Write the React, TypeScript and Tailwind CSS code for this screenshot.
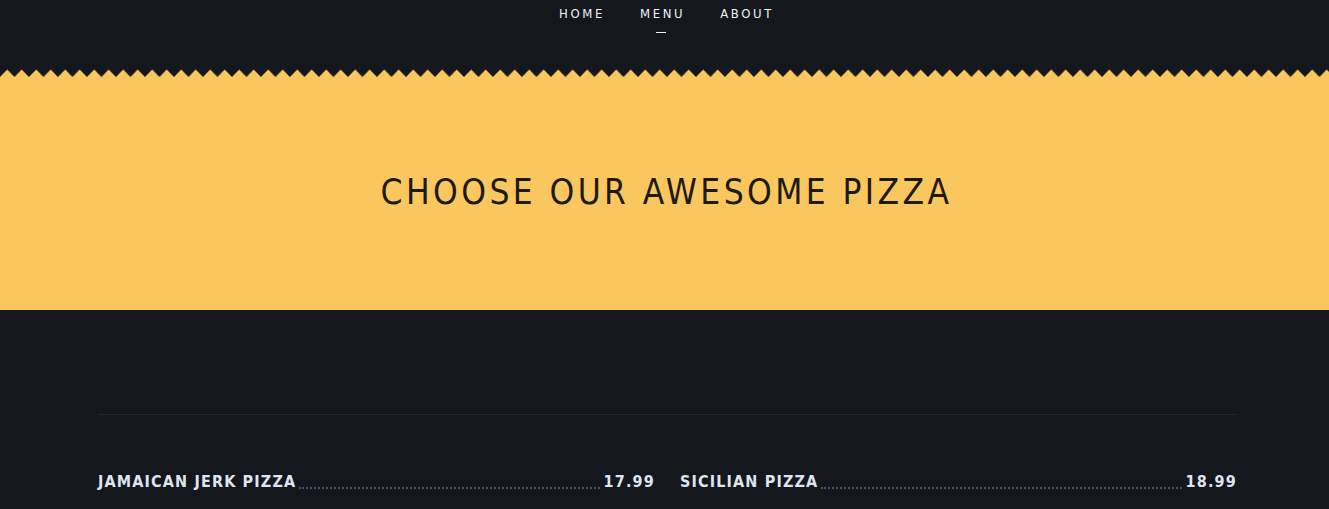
import React from "react";

const font = { fontFamily: '"DejaVu Sans Condensed", "DejaVu Sans", sans-serif' };

function Zigzag() {
  return (
    <svg className="block w-full h-[9px]" preserveAspectRatio="none">
      <defs>
        <pattern id="zz" width="14.5" height="9" patternUnits="userSpaceOnUse">
          <rect width="14.5" height="9" fill="#fac75f" />
          <path d="M0 0 L14.5 0 L14.5 8 L7.25 0.5 L0 8 Z" fill="#14171b" />
        </pattern>
      </defs>
      <rect width="100%" height="9" fill="url(#zz)" />
    </svg>
  );
}

function Item({ name, price }: { name: string; price: string }) {
  return (
    <div className="flex items-end">
      <span className="text-[16px] font-bold tracking-[1.15px] text-[#dde5ee] leading-none whitespace-nowrap">{name}</span>
      <span className="flex-1 mx-[3px] mb-[1px] border-b-2 border-dotted border-[#4a4f55]"></span>
      <span className="text-[16px] font-bold tracking-[1.2px] text-[#dde5ee] leading-none">{price}</span>
    </div>
  );
}

export default function App() {
  return (
    <div className="w-[1329px] h-[509px] overflow-hidden bg-[#14171b]" style={font}>
      <nav className="h-[69px] flex justify-center pt-[4px] pl-[4px]">
        <ul className="flex gap-[35px] text-[13px] tracking-[2.6px] text-[#eef1f3]">
          <li>HOME</li>
          <li className="flex flex-col items-center">
            <span>MENU</span>
            <span className="mt-[8px] mr-[3px] w-[10px] h-[1px] bg-[#eef1f3]"></span>
          </li>
          <li>ABOUT</li>
        </ul>
      </nav>
      <Zigzag />
      <section className="h-[232px] bg-[#fac75f] flex items-center justify-center">
        <h1 className="text-[35px] font-light tracking-[3.4px] text-[#1d1a14] -mt-[4px] pl-[4px]">CHOOSE OUR AWESOME PIZZA</h1>
      </section>
      <div className="mx-[98px] w-[1139px]">
        <div className="mt-[104px] h-px bg-[#23272c]"></div>
        <div className="mt-[59px] grid grid-cols-2 gap-[25px]">
          <Item name="JAMAICAN JERK PIZZA" price="17.99" />
          <Item name="SICILIAN PIZZA" price="18.99" />
        </div>
      </div>
    </div>
  );
}
